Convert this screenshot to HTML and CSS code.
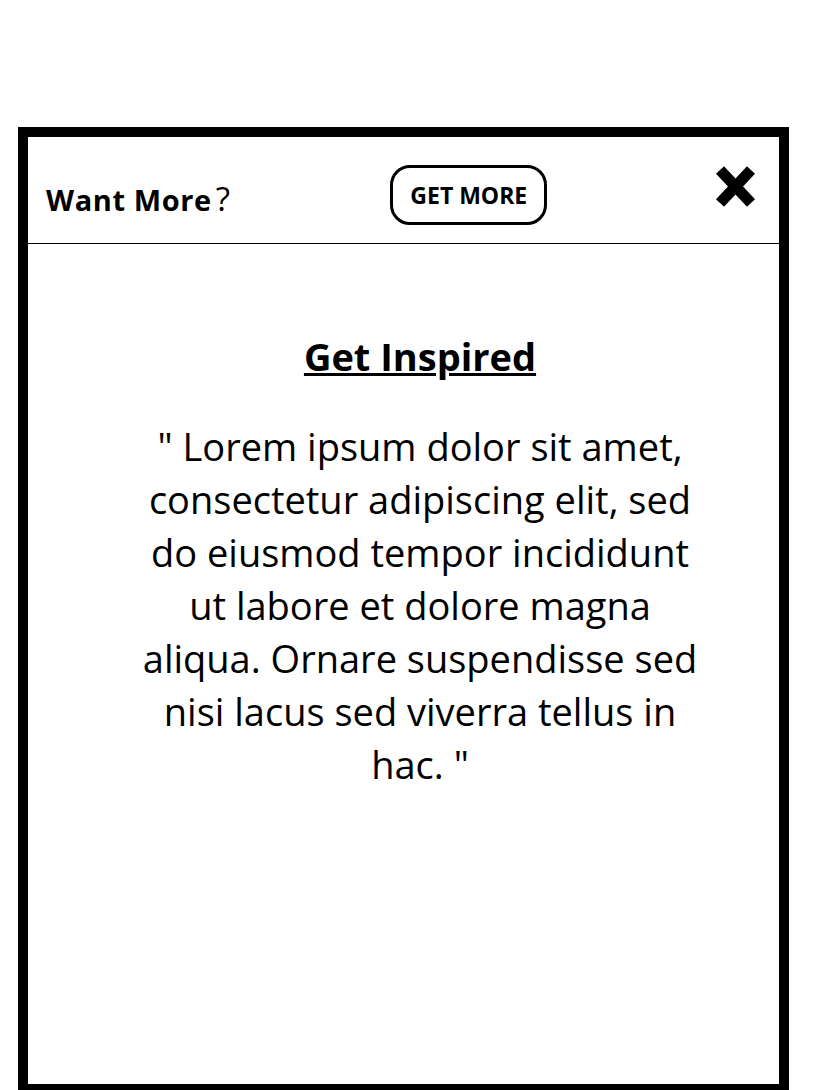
FILE: index.html
```html
<!DOCTYPE html>
<html lang="en">
<head>
<meta charset="UTF-8">
<meta name="viewport" content="width=device-width, initial-scale=1.0">
<title>Get Inspired</title>
<link rel="stylesheet" href="styles.css">
</head>
<body>
<div class="card">
    <div class="card-header">
        <span class="want">Want More<span class="question">?</span></span>
        <button class="get-more">GET MORE</button>
        <button class="close" aria-label="Close">
            <svg width="41" height="43" viewBox="0 0 41 43">
                <path d="M5 5 L36 38 M36 5 L5 38" stroke="#000" stroke-width="11" fill="none"/>
            </svg>
        </button>
    </div>
    <div class="card-body">
        <h2 class="title">Get Inspired</h2>
        <p class="quote">" Lorem ipsum dolor sit amet, consectetur adipiscing elit, sed do eiusmod tempor incididunt ut labore et dolore magna aliqua. Ornare suspendisse sed nisi lacus sed viverra tellus in hac. "</p>
    </div>
</div>
</body>
</html>
```

FILE: styles.css
```css
/* Basic styling */
body {
    margin: 0;
    font-family: "Open Sans", "Noto Sans", sans-serif;
    color: #000;
    background: #fff;
}
.card {
    margin: 127px 25px 0 18px;
    border: 10px solid #000;
    height: 947px;
}
.card-header {
    display: flex;
    align-items: center;
    justify-content: space-between;
    height: 106px;
    padding: 0 23px 0 18px;
    border-bottom: 1px solid #000;
}
.want {
    font-size: 29px;
    font-weight: bold;
    margin-top: 16px;
    letter-spacing: 0.6px;
}
.question {
    font-weight: normal;
    font-size: 33px;
    margin-left: 4px;
}
.get-more {
    font-family: inherit;
    font-size: 23px;
    font-weight: bold;
    background: #fff;
    color: #000;
    border: 3px solid #000;
    border-radius: 20px;
    width: 157px;
    height: 60px;
    margin-top: 10px;
    margin-right: 8px;
    padding: 0;
}
.close {
    background: none;
    border: none;
    padding: 0;
    line-height: 0;
    margin-top: -8px;
}
.card-body {
    text-align: center;
    padding: 0 0 0 33px;
}
.title {
    font-size: 38px;
    font-weight: bold;
    text-decoration: underline;
    margin: 90px 0 0;
    line-height: 44px;
}
.quote {
    font-size: 38px;
    line-height: 53px;
    width: 562px;
    margin: 42px auto 0;
}
```
